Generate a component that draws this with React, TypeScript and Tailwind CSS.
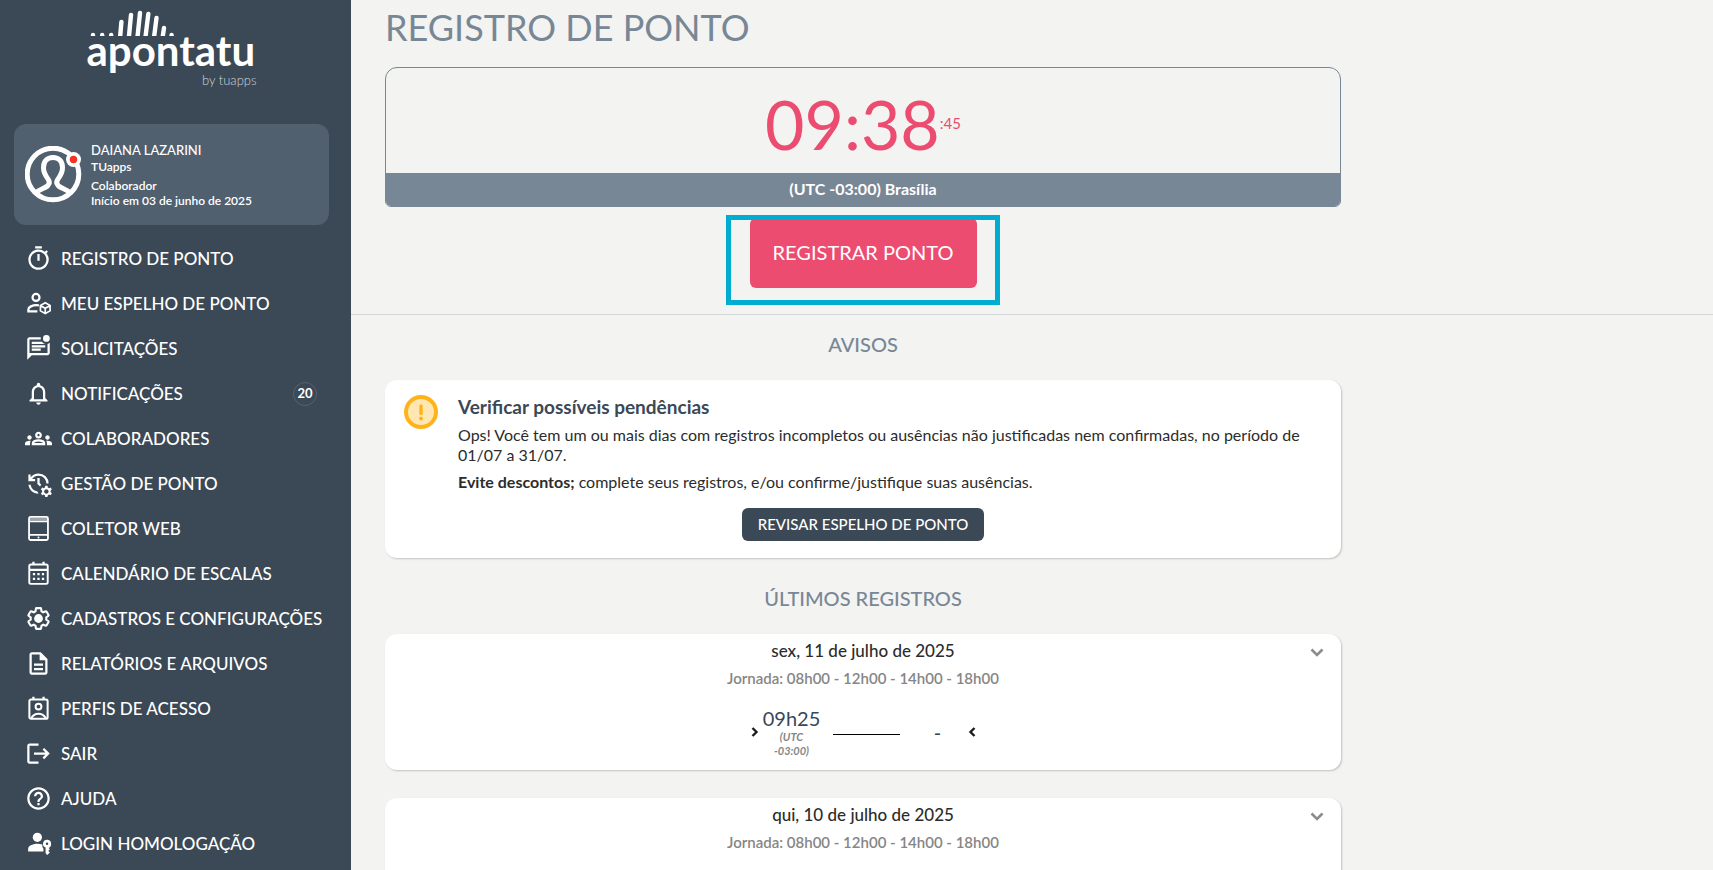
import { ReactNode, useState } from 'react';
import {
  MdHelpOutline,
  MdLogout,
  MdManageHistory,
  MdNotificationsNone,
  MdOutlineDescription,
  MdOutlineGroups,
  MdOutlineMarkUnreadChatAlt,
  MdOutlineTimer,
} from 'react-icons/md';

function PersonBoxIcon() {
  return (
    <svg viewBox="0 0 24 24" fill="none" stroke="currentColor" strokeWidth="2">
      <circle cx="9.8" cy="6.6" r="3.1" />
      <path d="M11 19H3v-1.6c0-2.4 3.6-3.9 7.300-3.900.8 0 1.400.1 2.100.2" />
      <path d="M18 11.300l4.300 2.500v4.700L18 21l-4.300-2.500v-4.700zM13.900 14l4.100 2.300 4.100-2.300M18 16.300V21" strokeWidth="1.500" />
    </svg>
  );
}

function TabletIcon() {
  return (
    <svg viewBox="0 0 24 24" fill="none" stroke="currentColor" strokeWidth="1.6">
      <rect x="3.6" y="1.600" width="16.800" height="20.600" rx="1.400" />
      <path d="M3.600 17.600h16.800M3.600 5.600h16.800" />
      <path d="M4.400 3.500h15.200" strokeOpacity="0.500" strokeWidth="2.200" />
      <circle cx="12" cy="19.900" r="0.900" fill="currentColor" stroke="none" />
    </svg>
  );
}

function CalendarIcon() {
  return (
    <svg viewBox="0 0 24 24" fill="none" stroke="currentColor" strokeWidth="1.700">
      <rect x="3.800" y="4" width="16.400" height="17.200" rx="1.400" />
      <path d="M3.800 8.800h16.400M7.500 1.500V4M16.500 1.500V4" strokeWidth="2" />
      <path d="M7 12.500h2M11 12.500h2M15 12.500h2M7 16.800h2M11 16.800h2M15 16.800h2" strokeWidth="2" />
    </svg>
  );
}

function ProfileIcon() {
  return (
    <svg viewBox="0 0 24 24" fill="none" stroke="currentColor" strokeWidth="1.800">
      <rect x="3.900" y="4" width="16.200" height="17.200" rx="1.400" />
      <path d="M7.500 1.500V4M16.500 1.500V4" strokeWidth="2" />
      <circle cx="12" cy="10.300" r="2.600" />
      <path d="M5.500 20.600c1.500-2.600 3.800-3.900 6.500-3.900s5 1.300 6.500 3.900" />
    </svg>
  );
}

function GearIcon() {
  return (
    <svg viewBox="0 0 24 24" fill="none">
      <path
        d="M19.43 12.98c.04-.32.07-.64.07-.98 0-.34-.03-.66-.07-.98l2.11-1.65c.19-.15.24-.42.12-.64l-2-3.46c-.09-.16-.26-.25-.44-.25-.06 0-.12.01-.17.03l-2.49 1c-.52-.4-1.08-.73-1.69-.98l-.38-2.65C14.46 2.18 14.25 2 14 2h-4c-.25 0-.46.18-.49.42l-.38 2.65c-.61.25-1.17.59-1.69.98l-2.49-1c-.06-.02-.12-.03-.18-.03-.17 0-.34.09-.43.25l-2 3.46c-.13.22-.07.49.12.64l2.11 1.65c-.04.32-.07.65-.07.98 0 .33.03.66.07.98l-2.11 1.65c-.19.15-.24.42-.12.64l2 3.46c.09.16.26.25.44.25.06 0 .12-.01.17-.03l2.49-1c.52.4 1.08.73 1.69.98l.38 2.65c.03.24.24.42.49.42h4c.25 0 .46-.18.49-.42l.38-2.65c.61-.25 1.17-.59 1.69-.98l2.49 1c.06.02.12.03.18.03.17 0 .34-.09.43-.25l2-3.46c.12-.22.07-.49-.12-.64l-2.11-1.65z"
        stroke="currentColor"
        strokeWidth="2"
        transform="translate(.9 .9) scale(.925)"
      />
      <circle cx="12" cy="12" r="3.9" fill="currentColor" />
    </svg>
  );
}

function PersonKeyIcon() {
  return (
    <svg viewBox="0 0 24 24" fill="currentColor">
      <circle cx="11" cy="6.5" r="4.100" />
      <path d="M15.4 12.900a19 19 0 0 0-4.400-.6c-2.800 0-8.200 1.300-8.200 4.300V19h13.600v-2.300a5 5 0 0 1-1-3.800z" />
      <path
        fillRule="evenodd"
        d="M23.2 12.300a3.600 3.600 0 1 0-4.900 3.300v5.100l1.500 1.500 2.300-2.300-1.400-1.400 1.400-1.400-1.100-1.100a3.600 3.600 0 0 0 2.200-3.700zm-3.600 1.100a1.100 1.100 0 1 1 0-2.200 1.100 1.100 0 0 1 0 2.200z"
      />
    </svg>
  );
}

const menu: { label: string; icon: ReactNode; count?: number }[] = [
  { label: 'REGISTRO DE PONTO', icon: <MdOutlineTimer /> },
  { label: 'MEU ESPELHO DE PONTO', icon: <PersonBoxIcon /> },
  { label: 'SOLICITAÇÕES', icon: <MdOutlineMarkUnreadChatAlt /> },
  { label: 'NOTIFICAÇÕES', icon: <MdNotificationsNone />, count: 20 },
  { label: 'COLABORADORES', icon: <MdOutlineGroups /> },
  { label: 'GESTÃO DE PONTO', icon: <MdManageHistory /> },
  { label: 'COLETOR WEB', icon: <TabletIcon /> },
  { label: 'CALENDÁRIO DE ESCALAS', icon: <CalendarIcon /> },
  { label: 'CADASTROS E CONFIGURAÇÕES', icon: <GearIcon /> },
  { label: 'RELATÓRIOS E ARQUIVOS', icon: <MdOutlineDescription /> },
  { label: 'PERFIS DE ACESSO', icon: <ProfileIcon /> },
  { label: 'SAIR', icon: <MdLogout /> },
  { label: 'AJUDA', icon: <MdHelpOutline /> },
  { label: 'LOGIN HOMOLOGAÇÃO', icon: <PersonKeyIcon /> },
];

function Logo() {
  return (
    <div className="relative mx-auto w-[170px] pt-6">
      <svg
        className="absolute left-0 top-2 h-7 w-[90px]"
        viewBox="0 0 90 28"
        fill="none"
        stroke="white"
        strokeWidth="4.4"
        strokeLinecap="round"
      >
        <path d="M34.4 14L33.2 28M44 7L42 28M53 5L50.6 28M61.3 6L58.6 28M69.5 10L67.2 28M77 20L75.8 28" />
        <path d="M6 27v1M15.2 27v1M24.2 27v1M84.6 27v1" />
      </svg>
      <div className="text-[42px] font-bold leading-[52px]">apontatu</div>
      <div className="-mt-0.5 text-right text-[13px] font-light leading-3 text-gray-300">by tuapps</div>
    </div>
  );
}

function UserCard() {
  return (
    <div className="mt-[38px] flex h-[101px] items-center gap-2 rounded-xl bg-[#50606f] px-[11px]">
      <svg className="h-[58px] w-[58px] shrink-0" viewBox="0 0 58 58" fill="none" stroke="white">
        <circle cx="28" cy="28" r="25.8" strokeWidth="5" />
        <path
          d="M11 47c3-4 8-4 11.500-7 2.500-2.400 2-5 .2-7.400-2.500-3.500-4.200-6.500-4.200-10.800C18.500 15.500 22 11.500 28 11.500S37.500 15.500 37.500 21.800c0 4.300-1.700 7.300-4.200 10.800-1.800 2.400-2.300 5 .2 7.400C37 43 42 43 45 47"
          strokeWidth="5"
        />
        <circle cx="48.500" cy="13.500" r="7.500" fill="white" stroke="none" />
        <circle cx="48.500" cy="13.500" r="3.700" fill="#f5331f" stroke="none" />
      </svg>
      <div className="text-xs font-semibold">
        <div className="text-[13px] font-medium leading-[18px]">DAIANA LAZARINI</div>
        <div className="leading-[15px]">TUapps</div>
        <div className="mt-1 leading-[15px]">Colaborador</div>
        <div className="leading-[15px]">Início em 03 de junho de 2025</div>
      </div>
    </div>
  );
}

function Sidebar() {
  return (
    <aside className="flex w-[351px] shrink-0 flex-col bg-[#3b4855] pl-[14px] pr-[22px] text-white">
      <Logo />
      <UserCard />
      <nav className="mt-[11px]">
        {menu.map((item) => (
          <a key={item.label} href="#" className="flex h-[45px] items-center gap-[9px] pl-[11px] pr-3">
            <span className="h-[27px] w-[27px] shrink-0 [&>svg]:h-full [&>svg]:w-full">{item.icon}</span>
            <span className="whitespace-nowrap text-[17px] font-medium">{item.label}</span>
            {item.count && (
              <span className="ml-auto flex h-6 w-6 items-center justify-center rounded-full border border-[#55616e] text-[13px] font-bold">
                {item.count}
              </span>
            )}
          </a>
        ))}
      </nav>
    </aside>
  );
}

function SectionTitle({ children }: { children: ReactNode }) {
  return <h2 className="text-center text-xl font-medium leading-6 text-[#788796]">{children}</h2>;
}

function DayCard({ date, open, onToggle }: { date: string; open: boolean; onToggle: () => void }) {
  return (
    <article className="relative h-[136px] rounded-xl bg-white pt-[5px] text-center shadow-[1px_1px_2px_rgba(0,0,0,0.2)]">
      <h3 className="text-[17px] font-medium leading-6 text-[#2c2c2c]">{date}</h3>
      <p className="mt-[3px] text-[15px] font-semibold leading-6 text-[#868686]">Jornada: 08h00 - 12h00 - 14h00 - 18h00</p>
      <button type="button" aria-label="Detalhes" onClick={onToggle} className="absolute right-3 top-2 p-1">
        <svg className="h-4 w-4" viewBox="0 0 16 16" fill="none" stroke="#8c8c8c" strokeWidth="2.600">
          <path d="M2.500 3.500L8 9l5.500-5.500" />
        </svg>
      </button>
      {open && (
        <div className="mt-4 flex items-center justify-center text-[#3b4855]">
          <svg className="h-3 w-2" viewBox="0 0 8 12" fill="none" stroke="#1c1c1c" strokeWidth="2.400">
            <path d="M1.500 2L5.500 6 1.500 10" />
          </svg>
          <div className="w-[66px]">
            <div className="text-xl leading-6">09h25</div>
            <div className="px-2 text-[11px] font-bold italic leading-[14px] text-[#868686]">(UTC -03:00)</div>
          </div>
          <div className="ml-2 mt-1 h-px w-[67px] bg-black" />
          <div className="w-[68px] pl-2 text-xl font-medium leading-6">-</div>
          <svg className="h-3 w-2" viewBox="0 0 8 12" fill="none" stroke="#1c1c1c" strokeWidth="2.400">
            <path d="M6.500 2L2.500 6 6.500 10" />
          </svg>
        </div>
      )}
    </article>
  );
}

export default function App() {
  const [openDays, setOpenDays] = useState([true, false]);
  const days = ['sex, 11 de julho de 2025', 'qui, 10 de julho de 2025'];

  const toggle = (i: number) => setOpenDays(openDays.map((v, n) => (n === i ? !v : v)));

  return (
    <div className="flex h-screen overflow-hidden bg-[#f3f3f1] font-['Lato','Open_Sans',sans-serif] text-[#2c2c2c]">
      <Sidebar />
      <main className="min-w-0 flex-1">
        <section className="border-b border-[#d3d6da] px-[34px] pb-[26px]">
          <div className="max-w-[956px]">
            <h1 className="pt-[3px] text-[36px] leading-[48px] text-[#788796]">REGISTRO DE PONTO</h1>
            <div className="mt-4 overflow-hidden rounded-b-md rounded-t-xl border border-[#788796] text-center">
              <div className="flex h-[105px] items-center justify-center pt-1.5 text-[#eb4c70]">
                <span className="text-[68px] leading-[80px]">09:38</span>
                <span className="text-[15px]">:45</span>
              </div>
              <div className="bg-[#788796] pb-px text-base font-bold leading-8 text-white">(UTC -03:00) Brasília</div>
            </div>
            <div className="relative mt-[11px] flex justify-center">
              <button type="button" className="h-[70px] w-[227px] rounded-md bg-[#eb4c70] pb-0.5 text-xl text-white">
                REGISTRAR PONTO
              </button>
              <div className="pointer-events-none absolute -top-[3px] h-[90px] w-[274px] border-[5px] border-[#00accf]" />
            </div>
          </div>
        </section>

        <section className="px-[34px] pt-[17px]">
          <div className="max-w-[956px]">
            <SectionTitle>AVISOS</SectionTitle>
            <article className="mt-6 rounded-xl bg-white pb-[17px] pl-[19px] pr-9 pt-[15px] shadow-[1px_1px_2px_rgba(0,0,0,0.2)]">
              <div className="flex gap-5">
                <svg className="h-[34px] w-[34px] shrink-0" viewBox="0 0 34 34">
                  <circle cx="17" cy="17" r="15" fill="#ffe6b3" stroke="#ffb319" strokeWidth="4" />
                  <path d="M17 11v7.500" stroke="#ffb319" strokeWidth="3.400" strokeLinecap="round" />
                  <circle cx="17" cy="23.500" r="2" fill="#ffb319" />
                </svg>
                <div className="flex-1 text-base leading-5">
                  <h3 className="text-[19px] font-bold leading-6 text-[#3b4855]">Verificar possíveis pendências</h3>
                  <p className="mt-1.5">
                    Ops! Você tem um ou mais dias com registros incompletos ou ausências não justificadas nem
                    confirmadas, no período de 01/07 a 31/07.
                  </p>
                  <p className="mt-[7px]">
                    <strong>Evite descontos;</strong> complete seus registros, e/ou confirme/justifique suas ausências.
                  </p>
                </div>
              </div>
              <div className="-mr-[17px] mt-4 flex justify-center">
                <button type="button" className="h-[33px] rounded-md bg-[#3b4855] px-4 text-[15px] font-medium text-white">
                  REVISAR ESPELHO DE PONTO
                </button>
              </div>
            </article>
            <div className="pb-6 pt-7">
              <SectionTitle>ÚLTIMOS REGISTROS</SectionTitle>
            </div>
            <div className="flex flex-col gap-7">
              {days.map((day, i) => (
                <DayCard key={day} date={day} open={openDays[i]} onToggle={() => toggle(i)} />
              ))}
            </div>
          </div>
        </section>
      </main>
    </div>
  );
}
